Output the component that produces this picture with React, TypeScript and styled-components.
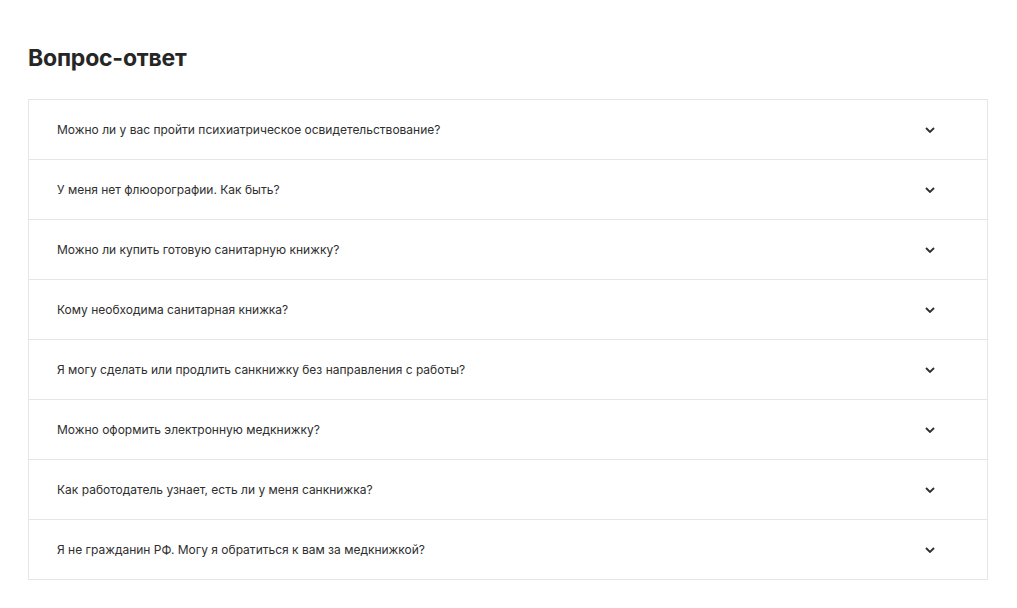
import React from "react";
import styled, { createGlobalStyle } from "styled-components";

const Global = createGlobalStyle`
  html, body { margin: 0; padding: 0; background: #fff; }
  body { font-family: "Inter", "Noto Sans", sans-serif; color: #2b2b2b; }
  * { box-sizing: border-box; }
`;

const Page = styled.div`
  padding: 41px 29px 28px 28px;
`;

const Title = styled.h2`
  margin: 0 0 24px 0;
  font-size: 23px;
  line-height: 34px;
  font-weight: 700;
  color: #262626;
  letter-spacing: -0.2px;
`;

const List = styled.div`
  border: 1px solid #e6e6e6;
  display: flex;
  flex-direction: column;
`;

const Row = styled.button`
  display: flex;
  align-items: center;
  justify-content: space-between;
  height: 60px;
  padding: 0 52px 0 28px;
  border: none;
  border-top: 1px solid #e6e6e6;
  background: #fff;
  font: inherit;
  text-align: left;
  cursor: pointer;
  &:first-child { border-top: none; height: 59px; }
`;

const Question = styled.span`
  font-size: 12px;
  color: #2e2e2e;
`;

const Chevron = () => (
  <svg width="10" height="6" viewBox="0 0 10 6" fill="none">
    <path d="M1 1l4 4 4-4" stroke="#2e2e2e" strokeWidth="1.8" />
  </svg>
);

const questions = [
  "Можно ли у вас пройти психиатрическое освидетельствование?",
  "У меня нет флюорографии. Как быть?",
  "Можно ли купить готовую санитарную книжку?",
  "Кому необходима санитарная книжка?",
  "Я могу сделать или продлить санкнижку без направления с работы?",
  "Можно оформить электронную медкнижку?",
  "Как работодатель узнает, есть ли у меня санкнижка?",
  "Я не гражданин РФ. Могу я обратиться к вам за медкнижкой?",
];

export default function App() {
  return (
    <>
      <Global />
      <Page>
        <Title>Вопрос-ответ</Title>
        <List>
          {questions.map((q) => (
            <Row key={q}>
              <Question>{q}</Question>
              <Chevron />
            </Row>
          ))}
        </List>
      </Page>
    </>
  );
}
